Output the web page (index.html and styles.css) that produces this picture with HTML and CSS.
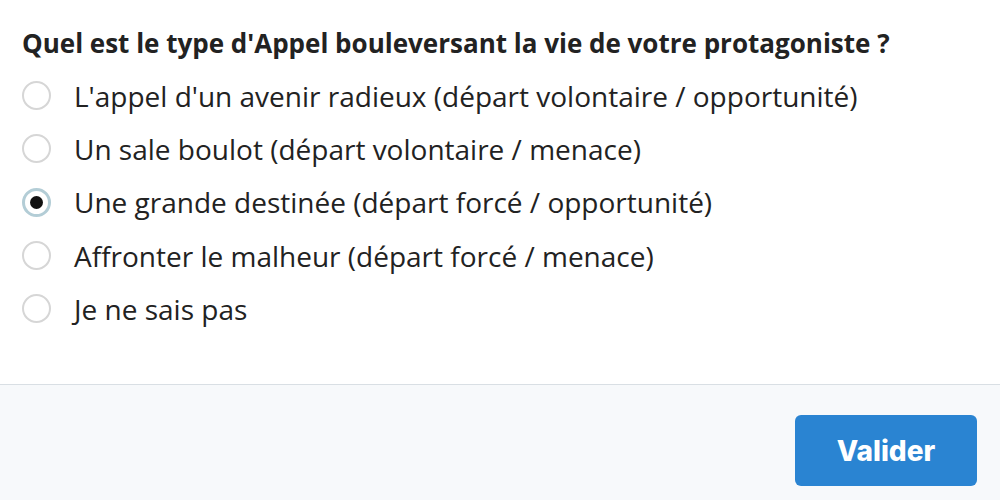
FILE: index.html
```html
<!DOCTYPE html>
<html lang="fr">
<head>
    <meta charset="UTF-8" />
    <title>Appel</title>
    <link rel="stylesheet" href="styles.css">
</head>
<body>
    <form class="quiz">
        <div class="quiz-body">
            <h1 class="question">Quel est le type d'Appel bouleversant la vie de votre protagoniste ?</h1>
            <ul class="options">
                <li><label class="option"><input type="radio" name="appel"><span class="radio"></span>L'appel d'un avenir radieux (départ volontaire / opportunité)</label></li>
                <li><label class="option"><input type="radio" name="appel"><span class="radio"></span>Un sale boulot (départ volontaire / menace)</label></li>
                <li><label class="option"><input type="radio" name="appel" checked><span class="radio"></span>Une grande destinée (départ forcé / opportunité)</label></li>
                <li><label class="option"><input type="radio" name="appel"><span class="radio"></span>Affronter le malheur (départ forcé / menace)</label></li>
                <li><label class="option"><input type="radio" name="appel"><span class="radio"></span>Je ne sais pas</label></li>
            </ul>
        </div>
        <div class="quiz-footer">
            <button type="submit" class="btn-valider">Valider</button>
        </div>
    </form>
</body>
</html>
```

FILE: styles.css
```css
* {
    box-sizing: border-box;
}

body {
    margin: 0;
    font-family: 'Open Sans', sans-serif;
    color: #222;
    background: #fff;
}

.quiz-body {
    height: 385px;
    padding: 27px 22px 0;
    border-bottom: 1px solid #d9dfe4;
}

.question {
    margin: 0 0 10px;
    font-size: 26px;
    font-weight: 700;
    line-height: 32px;
    color: #222;
}

.options {
    list-style: none;
    margin: 0;
    padding: 0;
}

.option {
    display: flex;
    align-items: center;
    height: 53.3px;
    font-size: 28px;
    color: #222;
    cursor: pointer;
}

.option input {
    display: none;
}

/* radio personnalisé */
.radio {
    width: 29px;
    height: 29px;
    margin: 0 23px 0 0;
    border: 2px solid #d6d6d6;
    border-radius: 50%;
    display: flex;
    align-items: center;
    justify-content: center;
    flex-shrink: 0;
}

.option input:checked + .radio {
    border: 3px solid #b3cdd6;
}

.option input:checked + .radio::after {
    content: "";
    width: 13px;
    height: 13px;
    border-radius: 50%;
    background: #111;
}

.quiz-footer {
    height: 115px;
    background: #f7f9fb;
    display: flex;
    justify-content: flex-end;
    align-items: flex-start;
    padding: 30px 23px 0;
}

.btn-valider {
    width: 182px;
    height: 71px;
    border: none;
    border-radius: 6px;
    background: #2a84d2;
    color: #fff;
    font-family: Inter, sans-serif;
    font-weight: 800;
    font-size: 28px;
    cursor: pointer;
}
```
